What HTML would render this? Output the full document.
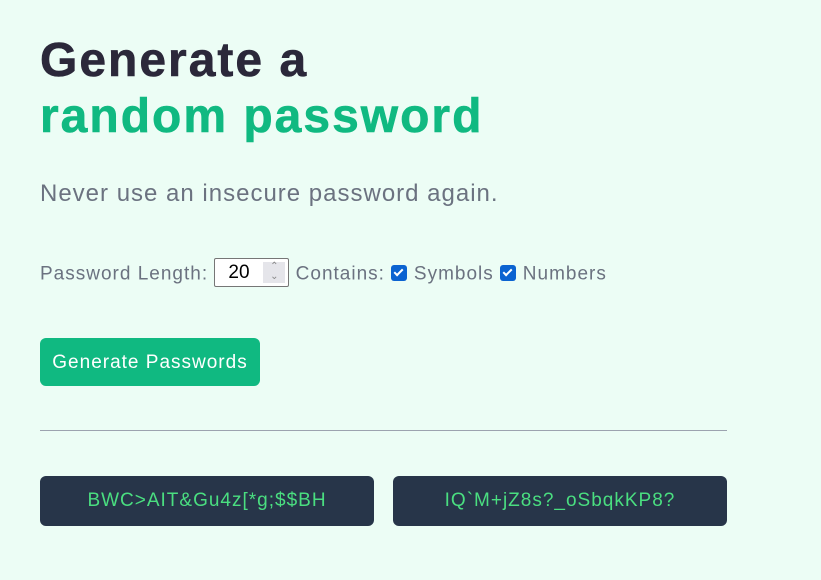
<!DOCTYPE html>
<html><head><style>
body{margin:0;width:821px;height:580px;background:#ecfdf5;font-family:"Liberation Sans",sans-serif;position:relative;overflow:hidden}
.a{position:absolute;white-space:nowrap}
h1{margin:0;position:absolute;left:40px;top:33px;font-size:48px;line-height:56px;font-weight:700;color:#2b283a;letter-spacing:2px;-webkit-text-stroke:0.6px}
h1 span{color:#10b981}
.sub{left:40px;top:180px;font-size:24px;letter-spacing:1px;color:#6b7280}
.row{left:40px;top:262px;font-size:19px;letter-spacing:1px;color:#6b7280}
.inp{display:inline-block;width:75px;height:29px;border:1px solid #767676;border-radius:2px;background:#fff;vertical-align:middle;position:relative;box-sizing:border-box;color:#000;margin-top:-4px;letter-spacing:0}
.inp b{font-weight:400;position:absolute;left:13px;top:3px}
.inp i{position:absolute;right:3px;top:3px;width:22px;height:21px;background:#e5e5ea;font-style:normal;font-size:10px;color:#888;text-align:center;line-height:10px}
.cb{display:inline-block;width:16px;height:16px;background:#0b63d1;border-radius:3px;vertical-align:middle;margin:-3px 7px 0 6px;position:relative}
.cb:after{content:"";position:absolute;left:5px;top:2px;width:3px;height:7px;border:solid #fff;border-width:0 2px 2px 0;transform:rotate(45deg)}
.btn{left:40px;top:338px;width:220px;height:48px;background:#10b981;border-radius:6px;color:#fff;font-size:19px;letter-spacing:1px;line-height:50px;text-align:center}
.hr{left:40px;top:430px;width:687px;height:1px;background:#9ca3af}
.pw{top:476px;width:334px;height:50px;background:#273549;border-radius:6px;color:#4ade80;font-size:19px;letter-spacing:1px;line-height:50px;text-align:center}
</style></head><body>
<h1>Generate a<br><span>random password</span></h1>
<div class="a sub">Never use an insecure password again.</div>
<div class="a row">Password Length: <span class="inp"><b>20</b><i>⌃<br>⌄</i></span> Contains:<span class="cb"></span>Symbols<span class="cb"></span>Numbers</div>
<div class="a btn">Generate Passwords</div>
<div class="a hr"></div>
<div class="a pw" style="left:40px">BWC&gt;AIT&amp;Gu4z[*g;$$BH</div>
<div class="a pw" style="left:393px">IQ`M+jZ8s?_oSbqkKP8?</div>
</body></html>
